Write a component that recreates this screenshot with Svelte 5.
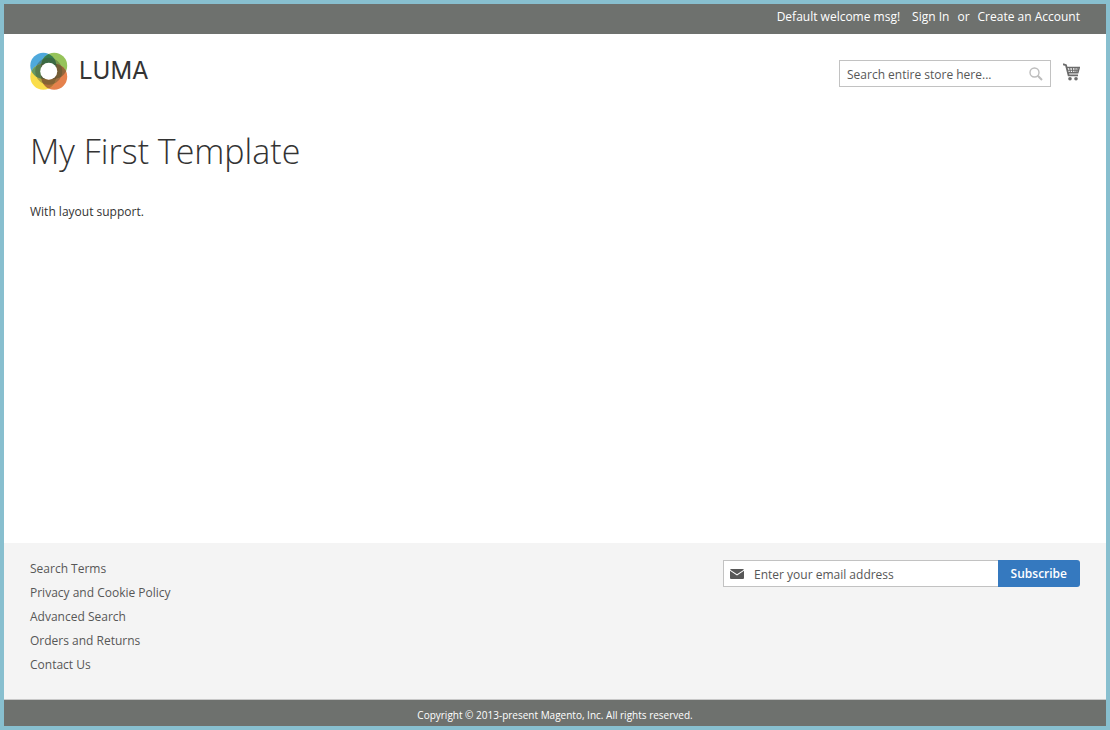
<script>
  const footerLinks = [
    'Search Terms',
    'Privacy and Cookie Policy',
    'Advanced Search',
    'Orders and Returns',
    'Contact Us'
  ];
  let query = $state('');
  let email = $state('');
</script>

<div class="page">
  <div class="panel">
    <span>Default welcome msg!</span>
    <a class="signin" href="#signin">Sign In</a>
    <span>or</span>
    <a href="#create">Create an Account</a>
  </div>

  <header>
    <a class="logo" href="#home" aria-label="LUMA">
      <svg width="38" height="38" viewBox="0 0 38 38" aria-hidden="true">
        <defs>
          <clipPath id="nw"><circle cx="13.300" cy="13.800" r="13" /></clipPath>
          <clipPath id="ne"><circle cx="24.200" cy="13.800" r="13" /></clipPath>
          <clipPath id="sw"><circle cx="13.300" cy="24.700" r="13" /></clipPath>
        </defs>
        <circle cx="13.300" cy="13.800" r="13" fill="#4fa9dc" />
        <circle cx="24.200" cy="13.800" r="13" fill="#96c35a" />
        <circle cx="24.200" cy="24.700" r="13" fill="#e5814c" />
        <circle cx="13.300" cy="24.700" r="13" fill="#fadd4b" />
        <circle cx="13.300" cy="24.700" r="13" fill="#689a62" clip-path="url(#nw)" />
        <circle cx="24.200" cy="24.700" r="13" fill="#b27038" clip-path="url(#sw)" />
        <circle cx="24.200" cy="24.700" r="13" fill="#94663a" clip-path="url(#ne)" />
        <circle cx="24.200" cy="13.800" r="13" fill="#367c50" clip-path="url(#nw)" />
        <g clip-path="url(#nw)"><circle cx="24.200" cy="24.700" r="13" fill="#315c42" opacity=".65" /></g>
        <g clip-path="url(#ne)"><circle cx="13.300" cy="24.700" r="13" fill="#6b452b" opacity=".5" /></g>
        <circle cx="18.750" cy="19.250" r="11" fill="none" stroke="#43502f" stroke-width="5" opacity=".4" />
        <circle cx="18.750" cy="19.250" r="8.500" fill="#fff" />
      </svg>
      <span>LUMA</span>
    </a>
    <form class="search" role="search" onsubmit={(e) => e.preventDefault()}>
      <input type="search" aria-label="Search" placeholder="Search entire store here..." bind:value={query} />
      <button type="submit" aria-label="Search">
        <svg width="14" height="14" viewBox="0 0 14 14" fill="none" stroke="#bdbdbd">
          <circle cx="5.500" cy="5.500" r="4.500" stroke-width="1.400" />
          <path d="M8.800 8.800L13 13" stroke-width="2" />
        </svg>
      </button>
    </form>
    <a class="cart" href="#cart" aria-label="My Cart">
      <svg width="17" height="18" viewBox="0 0 17 18" fill="none" stroke="#6b6b6b">
        <path d="M0 1.200L3 2.200L5.600 12.300H15" stroke-width="1.800" />
        <path d="M3.500 4.500H16.300L14.800 9.800H5" stroke-width="1.500" />
        <path d="M4.500 7.200H15.500M6.500 4L7.500 10M9.300 4L9.800 10M12 4V10M14.400 4L13.600 10" stroke-width="1.100" />
        <circle cx="7" cy="15.800" r="1.800" fill="#6b6b6b" stroke="none" />
        <circle cx="13" cy="15.800" r="1.800" fill="#6b6b6b" stroke="none" />
      </svg>
    </a>
  </header>

  <main>
    <h1>My First Template</h1>
    <p>With layout support.</p>
  </main>

  <footer>
    <ul>
      {#each footerLinks as label}
        <li><a href="#footer">{label}</a></li>
      {/each}
    </ul>
    <form class="newsletter" onsubmit={(e) => e.preventDefault()}>
      <label for="email" aria-label="Email">
        <svg width="14" height="10" viewBox="0 0 14 10">
          <path d="M0 1.800L7 6.500L14 1.800V9Q14 10 13 10H1Q0 10 0 9Z" fill="#575757" />
          <path d="M.2 .7Q.4 0 1 0H13Q13.600 0 13.800 .7L7 5.200Z" fill="#575757" />
        </svg>
      </label>
      <input id="email" type="email" placeholder="Enter your email address" bind:value={email} />
      <button type="submit">Subscribe</button>
    </form>
  </footer>

  <small class="copyright">Copyright © 2013-present Magento, Inc. All rights reserved.</small>
</div>

<style>
  :global(body) {
    margin: 0;
  }
  .page {
    box-sizing: border-box;
    min-height: 100vh;
    display: flex;
    flex-direction: column;
    border: 4px solid #88bfcf;
    background: #fff;
    color: #333;
    font: 12px/16px 'Open Sans', sans-serif;
  }
  a {
    color: inherit;
    text-decoration: none;
  }
  input,
  button {
    font: inherit;
    margin: 0;
  }
  .panel {
    display: flex;
    justify-content: flex-end;
    gap: 8px;
    padding: 5px 26px 9px;
    background: #6e716e;
    color: #fff;
  }
  .signin {
    margin-left: 4px;
  }
  header {
    display: flex;
    align-items: flex-start;
    padding: 17px 26px 0;
  }
  .logo {
    display: flex;
    align-items: center;
    gap: 11px;
    margin-right: auto;
    color: #333;
    font: 400 24px/40px Inter, sans-serif;
  }
  .logo svg {
    display: block;
  }
  .search {
    display: flex;
    align-items: center;
    box-sizing: border-box;
    width: 212px;
    height: 27px;
    margin-top: 9px;
    border: 1px solid #c2c2c2;
  }
  .search input {
    flex: 1;
    min-width: 0;
    padding: 2px 0 0 7px;
    border: 0;
    outline: 0;
    background: none;
    color: #575757;
  }
  input::placeholder {
    color: #575757;
    opacity: 1;
  }
  .search button {
    display: flex;
    padding: 0 7px;
    border: 0;
    background: none;
  }
  .cart {
    display: flex;
    margin: 12px 0 0 12px;
  }
  main {
    flex: 1;
    padding: 40px 26px;
  }
  h1 {
    margin: 0 0 33px;
    font-size: 34px;
    line-height: 40px;
    font-weight: 300;
  }
  p {
    margin: 0;
  }
  footer {
    display: flex;
    justify-content: space-between;
    align-items: flex-start;
    padding: 17px 26px 18px;
    border-bottom: 1px solid #c8c8c8;
    background: #f4f4f4;
    color: #575757;
  }
  ul {
    margin: 0;
    padding: 1px 0 0;
    list-style: none;
  }
  li {
    padding-bottom: 8px;
  }
  .newsletter {
    display: flex;
    width: 357px;
    height: 27px;
  }
  .newsletter label {
    display: flex;
    align-items: center;
    padding: 0 10px 0 6px;
    border: 1px solid #c2c2c2;
    border-right: 0;
    background: #fff;
  }
  .newsletter input {
    flex: 1;
    min-width: 0;
    padding: 2px 0 0;
    border: 1px solid #c2c2c2;
    border-width: 1px 0;
    outline: 0;
    color: #575757;
  }
  .newsletter button {
    padding: 0 13px;
    border: 0;
    border-radius: 0 3px 3px 0;
    background: #3579bf;
    color: #fff;
    font-weight: 600;
  }
  .copyright {
    padding: 7px 0 3px;
    background: #6e716e;
    color: #fff;
    font-size: 10px;
    text-align: center;
  }
</style>
